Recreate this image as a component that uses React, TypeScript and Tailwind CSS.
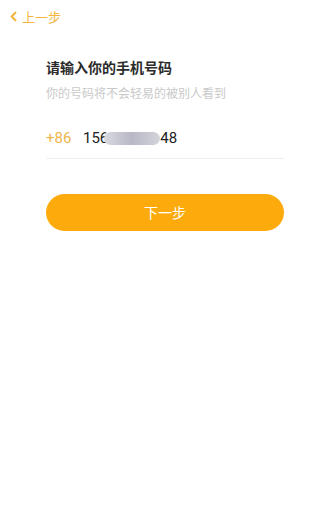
import { ChevronLeft } from "lucide-react";

export default function App() {
  return (
    <div
      className="w-[320px] h-[511px] bg-white flex flex-col"
      style={{ fontFamily: '"Noto Sans CJK SC", "Noto Sans", Arial, sans-serif' }}
    >
      {/* Top bar */}
      <div className="flex items-center h-[31px] pl-[6px] pt-[1px] text-[#f2b640]">
        <ChevronLeft size={15} strokeWidth={3.5} />
        <span className="text-[13px] leading-none ml-[1px]">上一步</span>
      </div>

      <div className="pl-[46px] pr-[36px] pt-[26px]">
        <h1 className="text-[14px] font-bold text-[#2b2b2b] leading-[20px]">请输入你的手机号码</h1>
        <p className="mt-[7px] text-[12px] text-[#c9c9c9] leading-[18px]">你的号码将不会轻易的被别人看到</p>

        {/* Phone input */}
        <div className="mt-[22px] flex items-center h-[28px] border-b border-[#eeeeee] pb-[6px] box-content">
          <span className="text-[15px] text-[#f0b44a] w-[37px]" style={{ fontFamily: "Roboto, Arial, sans-serif" }}>+86</span>
          <div className="flex items-center text-[15px] text-[#222]" style={{ fontFamily: "Roboto, Arial, sans-serif" }}>
            <span>156</span>
            <div className="-ml-[4px] w-[56px] h-[13px] rounded-full bg-gradient-to-r from-[#d9d9e0] via-[#b8b8c6] to-[#d4d4dc]" />
            <span>48</span>
          </div>
        </div>

        {/* Next button */}
        <button className="mt-[35px] w-full h-[37px] rounded-full bg-[#fdab0c] text-white text-[14px]">
          下一步
        </button>
      </div>
    </div>
  );
}
